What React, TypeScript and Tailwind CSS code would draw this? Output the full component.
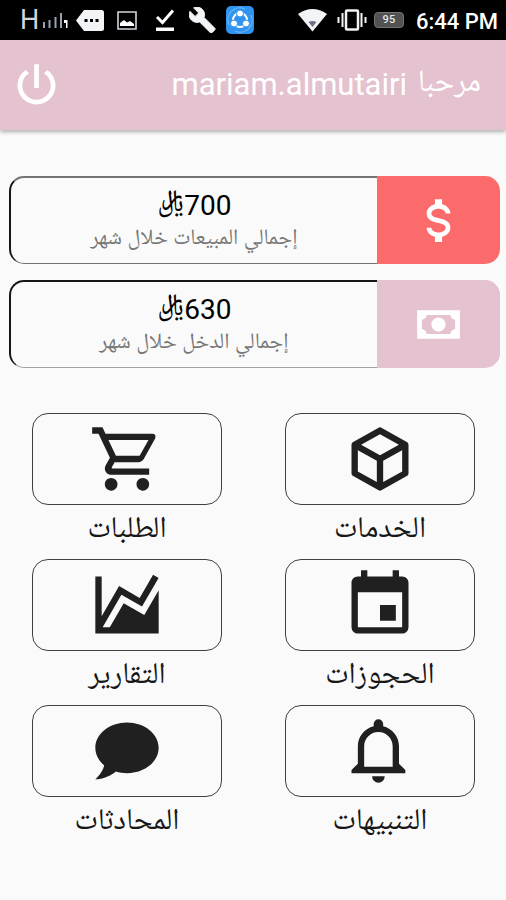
import clsx from "clsx";

const icons = {
  power:
    "M16.56,5.44L15.11,6.89C16.84,7.94 18,9.83 18,12A6,6 0 0,1 12,18A6,6 0 0,1 6,12C6,9.83 7.16,7.94 8.88,6.88L7.44,5.44C5.36,6.88 4,9.28 4,12A8,8 0 0,0 12,20A8,8 0 0,0 20,12C20,9.28 18.64,6.88 16.56,5.44M13,3H11V13H13",
  dollar:
    "M7,15H9C9,16.08 10.37,17 12,17C13.63,17 15,16.08 15,15C15,13.9 13.96,13.5 11.76,12.97C9.64,12.44 7,11.78 7,9C7,7.21 8.47,5.69 10.5,5.18V3H13.5V5.18C15.53,5.69 17,7.21 17,9H15C15,7.92 13.63,7 12,7C10.37,7 9,7.92 9,9C9,10.1 10.04,10.5 12.24,11.03C14.36,11.56 17,12.22 17,15C17,16.79 15.53,18.31 13.5,18.82V21H10.5V18.82C8.47,18.31 7,16.79 7,15Z",
  cash: "M3,6H21V18H3V6M12,9A3,3 0 0,1 15,12A3,3 0 0,1 12,15A3,3 0 0,1 9,12A3,3 0 0,1 12,9M7,8A2,2 0 0,1 5,10V14A2,2 0 0,1 7,16H17A2,2 0 0,1 19,14V10A2,2 0 0,1 17,8H7Z",
  cube: "M21,16.5C21,16.88 20.79,17.21 20.47,17.38L12.57,21.82C12.41,21.94 12.21,22 12,22C11.79,22 11.59,21.94 11.43,21.82L3.53,17.38C3.21,17.21 3,16.88 3,16.5V7.5C3,7.12 3.21,6.79 3.53,6.62L11.43,2.18C11.59,2.06 11.79,2 12,2C12.21,2 12.41,2.06 12.57,2.18L20.47,6.62C20.79,6.79 21,7.12 21,7.5V16.5M12,4.15L6.04,7.5L12,10.85L17.96,7.5L12,4.15M5,15.91L11,19.29V12.58L5,9.21V15.91M19,15.91V9.21L13,12.58V19.29L19,15.91Z",
  cart: "M17,18A2,2 0 0,1 19,20A2,2 0 0,1 17,22C15.89,22 15,21.1 15,20C15,18.89 15.89,18 17,18M1,2H4.27L5.21,4H20A1,1 0 0,1 21,5C21,5.17 20.95,5.34 20.88,5.5L17.3,11.97C16.96,12.58 16.3,13 15.55,13H8.1L7.2,14.63L7.17,14.75A0.25,0.25 0 0,0 7.42,15H19V17H7C5.89,17 5,16.1 5,15C5,14.65 5.09,14.32 5.24,14.04L6.6,11.59L3,4H1V2M7,18A2,2 0 0,1 9,20A2,2 0 0,1 7,22C5.89,22 5,21.1 5,20C5,18.89 5.89,18 7,18M16,11L18.78,6H6.14L8.5,11H16Z",
  calendar:
    "M19,19H5V8H19M16,1V3H8V1H6V3H5C3.89,3 3,3.89 3,5V19A2,2 0 0,0 5,21H19A2,2 0 0,0 21,19V5C21,3.89 20.1,3 19,3H18V1M17,12H12V17H17V12Z",
  chart:
    "M17.45,15.18L22,7.31V19L22,21H2V3H4V15.54L9.5,6L16,9.78L20.24,2.45L21.97,3.45L16.74,12.5L10.23,8.75L4.31,19H6.57L10.96,11.44L17.45,15.18Z",
  bell: "M16,17H7V10.5C7,8 9,6 11.5,6C14,6 16,8 16,10.5M18,16V10.5C18,7.43 15.86,4.86 13,4.18V3.5A1.5,1.5 0 0,0 11.5,2A1.5,1.5 0 0,0 10,3.5V4.18C7.13,4.86 5,7.43 5,10.5V16L3,18V19H20V18M11.5,22A2,2 0 0,0 13.5,20H9.5A2,2 0 0,0 11.5,22Z",
  chat: "M12,3C17.5,3 22,6.58 22,11C22,15.42 17.5,19 12,19C10.76,19 9.57,18.82 8.47,18.5C5.55,21 2,21 2,21C4.33,18.67 4.7,17.1 4.75,16.5C3.05,15.07 2,13.13 2,11C2,6.58 6.5,3 12,3Z",
};

type IconName = keyof typeof icons;

const Icon = ({ name, className }: { name: IconName; className: string }) => (
  <svg viewBox="0 0 24 24" className={clsx("shrink-0 fill-current", className)}>
    <path d={icons[name]} />
  </svg>
);

const StatusBar = () => (
  <div dir="ltr" className="flex h-10 items-center bg-black pl-5 pr-2 text-white">
    <span className="w-[23px] text-[27px] leading-none text-gray-300">H</span>
    <svg viewBox="0 0 25 16" className="h-4 w-[25px] fill-gray-400">
      <path d="M0 10h2v6H0zM5.500 8h2v8h-2zM11.500 5h2v11h-2zM17 1h2v15h-2z" />
      <path d="M21 8h3.500v8H23v-5h-2z" className="fill-white" />
    </svg>
    <svg viewBox="0 0 28 21" className="ml-2 h-[21px] w-7">
      <path d="M8 0h17.500a2.500 2.500 0 0 1 2.500 2.500v16a2.500 2.500 0 0 1-2.500 2.500H8L0 10.500z" className="fill-gray-100" />
      <path d="M8.500 9h3v3h-3zM14 9h3v3h-3zM19.500 9h3v3h-3z" className="fill-black" />
    </svg>
    <svg viewBox="0 0 20 19" className="ml-[13px] h-[19px] w-5">
      <path d="M1 1h18v17H1z" className="fill-none stroke-gray-300" strokeWidth="1.6" />
      <path d="M3 15v-3l4-3 3 2.500 3-1.500 4 3v2z" className="fill-white" />
    </svg>
    <svg viewBox="0 0 20 23" className="ml-[18px] h-[23px] w-5">
      <path d="M2 8l5.500 5.500L18 1.500" className="fill-none stroke-white" strokeWidth="3" />
      <path d="M1 18.500h18v3.500H1z" className="fill-white" />
    </svg>
    <svg viewBox="1 1 22.500 22" className="ml-[14px] h-[26px] w-[27px] fill-gray-100">
      <path d="M22.700 19l-9.100-9.100c.9-2.300.4-5-1.500-6.900-2-2-5-2.400-7.400-1.300L9 6 6 9 1.600 4.700C.4 7.100.9 10.100 2.900 12.100c1.900 1.900 4.600 2.400 6.900 1.500l9.100 9.100c.4.4 1 .4 1.400 0l2.300-2.300c.5-.4.5-1.100.1-1.400z" strokeWidth="0.8" className="stroke-gray-100" />
    </svg>
    <svg viewBox="0 0 28 28" className="ml-[10px] h-7 w-7">
      <rect width="28" height="28" rx="5" className="fill-[#2f93ef]" />
      <path d="M3 19A12 12 0 0 1 19 3M9 25A12 12 0 0 0 25 9" className="fill-none stroke-[#6bb9fb]" strokeWidth="1.2" />
      <circle cx="14" cy="14" r="7" className="fill-none stroke-white" strokeWidth="2" />
      <g className="fill-white stroke-[#2f93ef]">
        <circle cx="14" cy="7.500" r="3.500" />
        <circle cx="8" cy="17.500" r="3.500" />
        <circle cx="20" cy="17.500" r="3.500" />
      </g>
    </svg>
    <svg viewBox="0 0 29 23" className="ml-[44px] h-[23px] w-[29px]">
      <path d="M0 5Q14.500-5 29 5L14.500 22.500z" className="fill-gray-100" />
      <path d="M10.500 13q4-2 8 0l-4 5z" className="fill-gray-500" />
    </svg>
    <svg viewBox="0 0 30 22" className="ml-[10px] h-[22px] w-[30px] fill-none stroke-gray-100">
      <rect x="9" y="1.500" width="12" height="19" rx="1" strokeWidth="2.500" />
      <path d="M5.500 4v14M24.500 4v14" strokeWidth="2" />
      <path d="M1.500 8v6M28.500 8v6" strokeWidth="2" />
    </svg>
    <span className="ml-[7px] flex h-4 w-[30px] items-center justify-center rounded-sm border border-neutral-500 bg-neutral-600 text-[11px] font-medium tracking-wide text-neutral-200">
      95
    </span>
    <span className="ml-auto mt-1 text-[22px] leading-none font-medium whitespace-nowrap">6:44 PM</span>
  </div>
);

type SummaryCardProps = {
  amount: string;
  label: string;
  icon: IconName;
  color: string;
  border: string;
};

const SummaryCard = ({ amount, label, icon, color, border }: SummaryCardProps) => (
  <div className="flex h-[88px]">
    <div className={clsx("flex w-[123px] items-center justify-center rounded-r-[15px] text-white", color)}>
      <Icon name={icon} className="size-[57px]" />
    </div>
    <div
      className={clsx(
        "flex flex-1 flex-col items-center rounded-l-[15px] border border-r-0 border-l-2 border-l-neutral-900",
        border
      )}
    >
      <p className="mt-2.5 h-[38px] text-[28px] leading-9 text-black">{amount}﷼</p>
      <p className="text-[22px] leading-7 text-[#777]">{label}</p>
    </div>
  </div>
);

const menu: { label: string; icon: IconName }[] = [
  { label: "الخدمات", icon: "cube" },
  { label: "الطلبات", icon: "cart" },
  { label: "الحجوزات", icon: "calendar" },
  { label: "التقارير", icon: "chart" },
  { label: "التنبيهات", icon: "bell" },
  { label: "المحادثات", icon: "chat" },
];

const App = () => {
  return (
    <div
      dir="rtl"
      className="h-[900px] w-[506px] overflow-hidden bg-[#fafafa] font-[Roboto,'Noto_Naskh_Arabic_UI','DejaVu_Sans',sans-serif]"
    >
      <StatusBar />

      <header className="flex h-[90px] items-center justify-between bg-[#e5c2cf] pr-[25px] pl-2 text-white shadow-[0_2px_4px_rgba(0,0,0,0.3)]">
        <h1 className="pb-0.5 text-[31px] leading-none whitespace-nowrap [word-spacing:3px]">مرحبا mariam.almutairi</h1>
        <Icon name="power" className="size-[57px]" />
      </header>

      <section className="mt-[46px] flex flex-col gap-4 pr-1.5 pl-[9px]">
        <SummaryCard
          amount="700"
          label="إجمالي المبيعات خلال شهر"
          icon="dollar"
          color="bg-[#fb6b6b]"
          border="border-t-2 border-t-neutral-500 border-b-neutral-500"
        />
        <SummaryCard
          amount="630"
          label="إجمالي الدخل خلال شهر"
          icon="cash"
          color="bg-[#e5c2cf]"
          border="border-t-2 border-t-neutral-900 border-b-neutral-400"
        />
      </section>

      <section className="mt-[45px] grid grid-cols-[190px_190px] justify-between pr-[31px] pl-8">
        {menu.map((item) => (
          <div key={item.label} className="flex h-[146px] flex-col items-center">
            <div className="flex h-[92px] w-full items-center justify-center rounded-[16px] border-[1.5px] border-neutral-700 text-[#202020]">
              <Icon name={item.icon} className="size-[76px]" />
            </div>
            <p className="mt-1.5 text-[30px] leading-10 text-neutral-900">{item.label}</p>
          </div>
        ))}
      </section>
    </div>
  );
};
export default App;
